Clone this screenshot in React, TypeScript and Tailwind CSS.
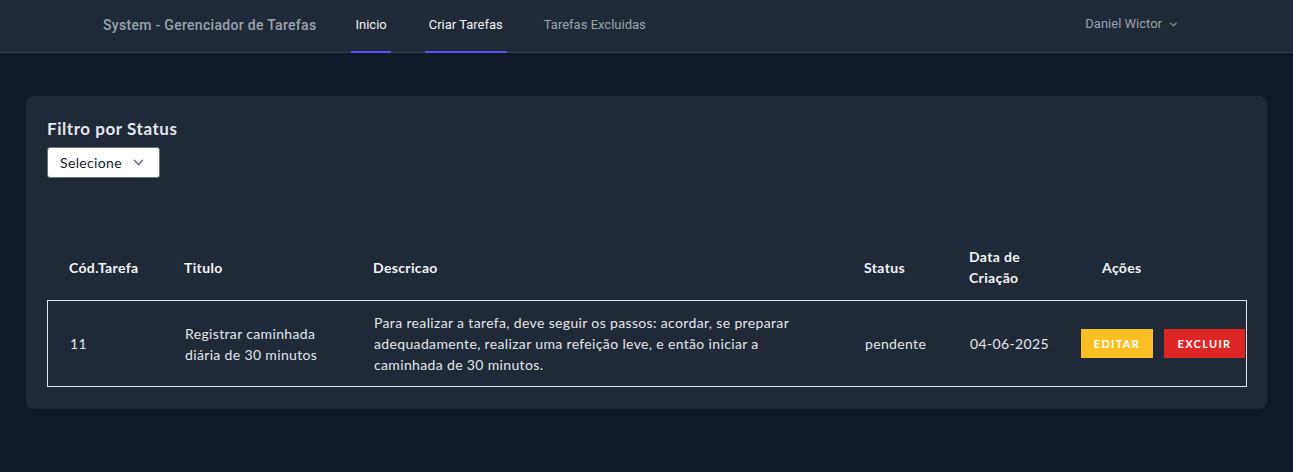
import React from "react";

function Chevron({ className }: { className?: string }) {
  return (
    <svg viewBox="0 0 20 20" fill="currentColor" className={className}>
      <path
        fillRule="evenodd"
        d="M5.23 7.21a.75.75 0 011.06.02L10 11.17l3.71-3.94a.75.75 0 111.08 1.04l-4.25 4.5a.75.75 0 01-1.08 0l-4.25-4.5a.75.75 0 01.02-1.06z"
        clipRule="evenodd"
      />
    </svg>
  );
}

export default function App() {
  return (
    <div
      className="min-h-[472px] bg-[#111827]"
      style={{ fontFamily: "Lato, 'Noto Sans', sans-serif" }}
    >
      {/* Navbar */}
      <nav className="h-[53px] border-b border-[#374151] bg-[#1f2937]">
        <div className="flex h-[53px] items-stretch justify-between pl-[103px] pr-[113px] font-['Roboto',sans-serif] text-[13px]">
          <div className="flex items-stretch">
            <div className="flex items-center pb-[2px] text-[14px] font-medium tracking-[0.3px] text-[#9ca3af]">
              System - Gerenciador de Tarefas
            </div>
            <a className="ml-[35px] flex items-center border-b-2 border-[#5b50f0] px-[4px] pb-[2px] text-[#f3f4f6]">
              Inicio
            </a>
            <a className="ml-[34px] flex items-center border-b-2 border-[#5b50f0] px-[4px] pb-[2px] text-[#f3f4f6]">
              Criar Tarefas
            </a>
            <a className="ml-[33px] flex items-center border-b-2 border-transparent px-[4px] pb-[2px] text-[#9ca3af]">
              Tarefas Excluidas
            </a>
          </div>
          <div className="flex items-center gap-[5px] pb-[5px] text-[#9ca3af]">
            <span>Daniel Wictor</span>
            <Chevron className="h-[13px] w-[13px]" />
          </div>
        </div>
      </nav>

      {/* Main */}
      <main className="px-[26px] pt-[43px]">
        <div className="rounded-lg bg-[#1f2937] px-[21px] pb-[22px] pt-[21px] tracking-[0.35px]">
          <h2 className="text-[17px] font-bold leading-6 tracking-[0.55px] text-[#e5e7eb]">
            Filtro por Status
          </h2>
          <div className="mt-[6px] flex h-[31px] w-[113px] items-center justify-between rounded-[3px] border border-[#6b7280] bg-white pl-[12px] pr-[11px] text-[14px] text-[#111827]">
            <span>Selecione</span>
            <Chevron className="h-[19px] w-[19px] text-[#6b7280]" />
          </div>

          {/* Table */}
          <div className="mt-[56px] w-[1200px] text-[14px] leading-[21px]">
            <div className="grid grid-cols-[115px_189px_491px_105px_112px_188px] items-center py-[12px] font-bold text-[#f3f4f6]">
              <div className="pl-[22px]">Cód.Tarefa</div>
              <div className="pl-[22px]">Titulo</div>
              <div className="pl-[22px]">Descricao</div>
              <div className="pl-[22px]">Status</div>
              <div className="px-[22px]">Data de Criação</div>
              <div className="pl-[43px]">Ações</div>
            </div>
            <div className="grid grid-cols-[115px_189px_491px_105px_112px_188px] items-center border border-[#e5e7eb] py-[11px] text-[#e5e7eb]">
              <div className="pl-[22px]">11</div>
              <div className="px-[22px]">Registrar caminhada diária de 30 minutos</div>
              <div className="px-[22px]">
                Para realizar a tarefa, deve seguir os passos: acordar, se preparar
                adequadamente, realizar uma refeição leve, e então iniciar a
                caminhada de 30 minutos.
              </div>
              <div className="pl-[22px]">pendente</div>
              <div className="pl-[22px]">04-06-2025</div>
              <div className="flex items-center gap-[11px] pl-[21px]">
                <button className="flex h-[29px] w-[72px] items-center justify-center bg-[#fbbf24] text-[11px] font-bold tracking-[0.12em] text-white">
                  EDITAR
                </button>
                <button className="flex h-[29px] w-[81px] items-center justify-center bg-[#dc2626] text-[11px] font-bold tracking-[0.12em] text-white">
                  EXCLUIR
                </button>
              </div>
            </div>
          </div>
        </div>
      </main>
    </div>
  );
}
